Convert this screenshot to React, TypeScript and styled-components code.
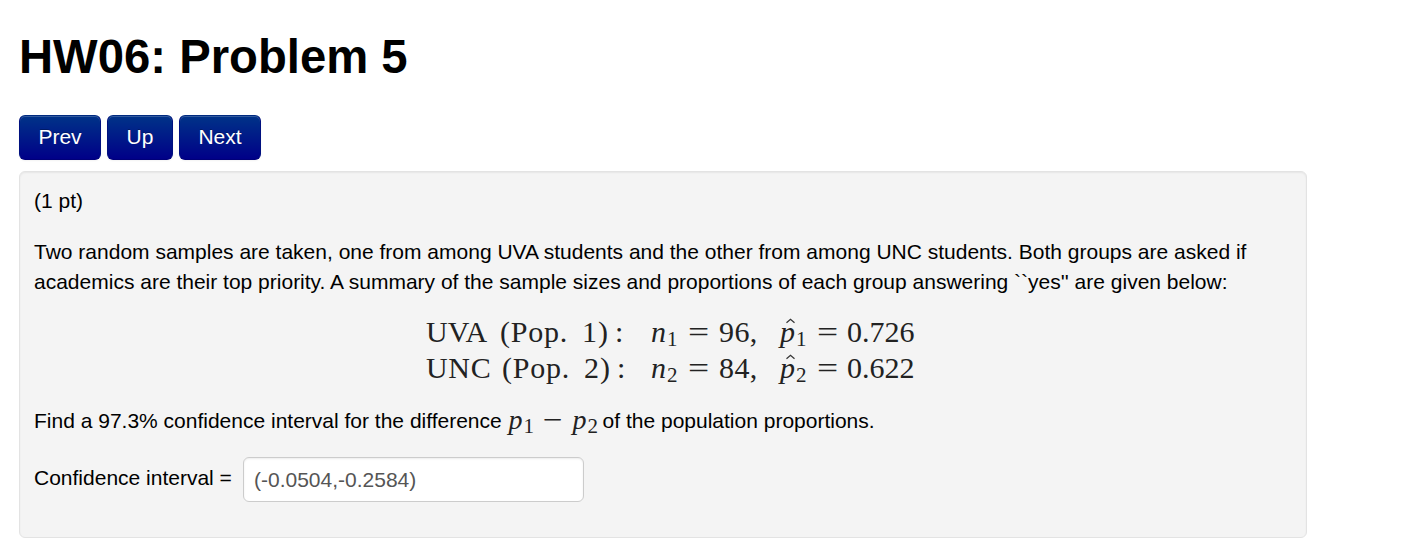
import React from "react";
import styled, { createGlobalStyle } from "styled-components";

const GlobalStyle = createGlobalStyle`
  * { box-sizing: border-box; }
  body {
    margin: 0;
    background: #fff;
    color: #000;
    font: 21px/30px "Liberation Sans", Arial, sans-serif;
  }
`;

const Page = styled.main`
  padding: 27px 0 0 19px;
  width: 1307px;
`;

const Title = styled.h1`
  margin: 0;
  height: 60px;
  font-size: 47.25px;
  line-height: 60px;
  font-weight: 700;
  white-space: nowrap;
`;

const Nav = styled.nav`
  display: flex;
  gap: 6px;
  margin-top: 28px;
`;

const NavButton = styled.button<{ $width: number }>`
  width: ${(p) => p.$width}px;
  height: 45px;
  padding: 0 0 1px;
  border: 1px solid;
  border-color: #002a80 #00107f #000078;
  border-radius: 6px;
  background: linear-gradient(#003388, #000088);
  box-shadow: inset 0 1px 0 rgba(255, 255, 255, 0.2), 0 1px 2px rgba(0, 0, 0, 0.05);
  color: #fff;
  font: inherit;
  text-shadow: 0 -1px 0 rgba(0, 0, 0, 0.25);
`;

const Well = styled.section`
  height: 367px;
  margin-top: 11px;
  padding: 14px;
  border: 1px solid #e3e3e3;
  border-radius: 6px;
  background: #f4f4f4;
  box-shadow: inset 0 1px 2px rgba(0, 0, 0, 0.06);
`;

const Paragraph = styled.p<{ $top?: number }>`
  margin: ${(p) => p.$top ?? 0}px 0 0;
  white-space: nowrap;
`;

const Line = styled.span`
  display: block;
`;

const Equations = styled.div`
  margin: 17px 0 0 392px;
  color: #222;
  font: 30px/36px "Liberation Serif", "Times New Roman", serif;
`;

const EquationRow = styled.div`
  display: flex;
  height: 36px;
  white-space: pre;
`;

const Cell = styled.span<{ $width: number; $spacing?: number }>`
  flex: none;
  width: ${(p) => p.$width}px;
  letter-spacing: ${(p) => p.$spacing ?? 0}px;
`;

const Operator = styled.span<{ $width: number }>`
  flex: none;
  display: inline-block;
  width: ${(p) => p.$width}px;
`;

const Wide = styled.span`
  display: inline-block;
  transform: scaleX(1.25);
  transform-origin: left center;
`;

const Variable = styled.i`
  position: relative;
  display: inline-block;
`;

const HatMark = styled.svg`
  position: absolute;
  left: 5px;
  top: 4px;
`;

const Sub = styled.span`
  display: inline-block;
  position: relative;
  top: 4px;
  margin-left: 1px;
  font-size: 21px;
  line-height: 1;
`;

const FindRow = styled.div`
  display: flex;
  height: 30px;
  margin-top: 20px;
  white-space: pre;
`;

const InlineMath = styled.span`
  display: flex;
  width: 95px;
  padding-left: 1px;
  color: #222;
  font: 28px/28px "Liberation Serif", "Times New Roman", serif;
`;

const AnswerRow = styled.label`
  display: flex;
  margin-top: 21px;
  height: 45px;
`;

const AnswerLabel = styled.span`
  width: 209px;
  padding-top: 6px;
  white-space: nowrap;
`;

const AnswerInput = styled.input`
  width: 341px;
  height: 45px;
  padding: 1px 9px 0 10px;
  border: 1px solid #ccc;
  border-radius: 6px;
  background: #fff;
  box-shadow: inset 0 1px 2px rgba(0, 0, 0, 0.075);
  color: #555;
  font: inherit;
  outline: none;
`;

const groups = [
  { name: "UVA", index: "1", size: "96", proportion: "0.726", nameWidth: 74, spacing: 0 },
  { name: "UNC", index: "2", size: "84", proportion: "0.622", nameWidth: 76, spacing: 0.7 },
];

const Hat = () => (
  <HatMark width="11" height="6" viewBox="0 0 11 6" fill="none" stroke="#333" strokeWidth="1.2">
    <path d="M1.5 4.7 5.5 1.2 9.5 4.7" />
  </HatMark>
);

export default function App() {
  return (
    <>
      <GlobalStyle />
      <Page>
        <Title>HW06: Problem 5</Title>
        <Nav>
          <NavButton $width={82}>Prev</NavButton>
          <NavButton $width={66}>Up</NavButton>
          <NavButton $width={82}>Next</NavButton>
        </Nav>
        <Well>
          <Paragraph>(1 pt)</Paragraph>
          <Paragraph $top={21}>
            <Line>
              Two random samples are taken, one from among UVA students and the other from among UNC students. Both groups are asked if
            </Line>
            <Line>
              academics are their top priority. A summary of the sample sizes and proportions of each group answering ``yes'' are given below:
            </Line>
          </Paragraph>
          <Equations>
            {groups.map((g) => (
              <EquationRow key={g.name}>
                <Cell $width={g.nameWidth} $spacing={g.spacing}>{g.name}</Cell>
                <Cell $width={82} $spacing={0.8}>(Pop.</Cell>
                <Cell $width={33} $spacing={1}>{g.index})</Cell>
                <Cell $width={225 - g.nameWidth - 115}>:</Cell>
                <Cell $width={37}><Variable>n</Variable><Sub>{g.index}</Sub></Cell>
                <Operator $width={31}><Wide>=</Wide></Operator>
                <Cell $width={61} $spacing={0.4}>{g.size},</Cell>
                <Cell $width={37}><Variable>p<Hat /></Variable><Sub>{g.index}</Sub></Cell>
                <Operator $width={30}><Wide>=</Wide></Operator>
                <Cell $width={70}>{g.proportion}</Cell>
              </EquationRow>
            ))}
          </Equations>
          <FindRow>
            <span>Find a 97.3% confidence interval for the difference </span>
            <InlineMath>
              <Cell $width={34}><Variable>p</Variable><Sub>1</Sub></Cell>
              <Operator $width={30}><Wide>−</Wide></Operator>
              <Cell $width={30}><Variable>p</Variable><Sub>2</Sub></Cell>
            </InlineMath>
            <span>of the population proportions.</span>
          </FindRow>
          <AnswerRow>
            <AnswerLabel>Confidence interval =</AnswerLabel>
            <AnswerInput defaultValue="(-0.0504,-0.2584)" />
          </AnswerRow>
        </Well>
      </Page>
    </>
  );
}
